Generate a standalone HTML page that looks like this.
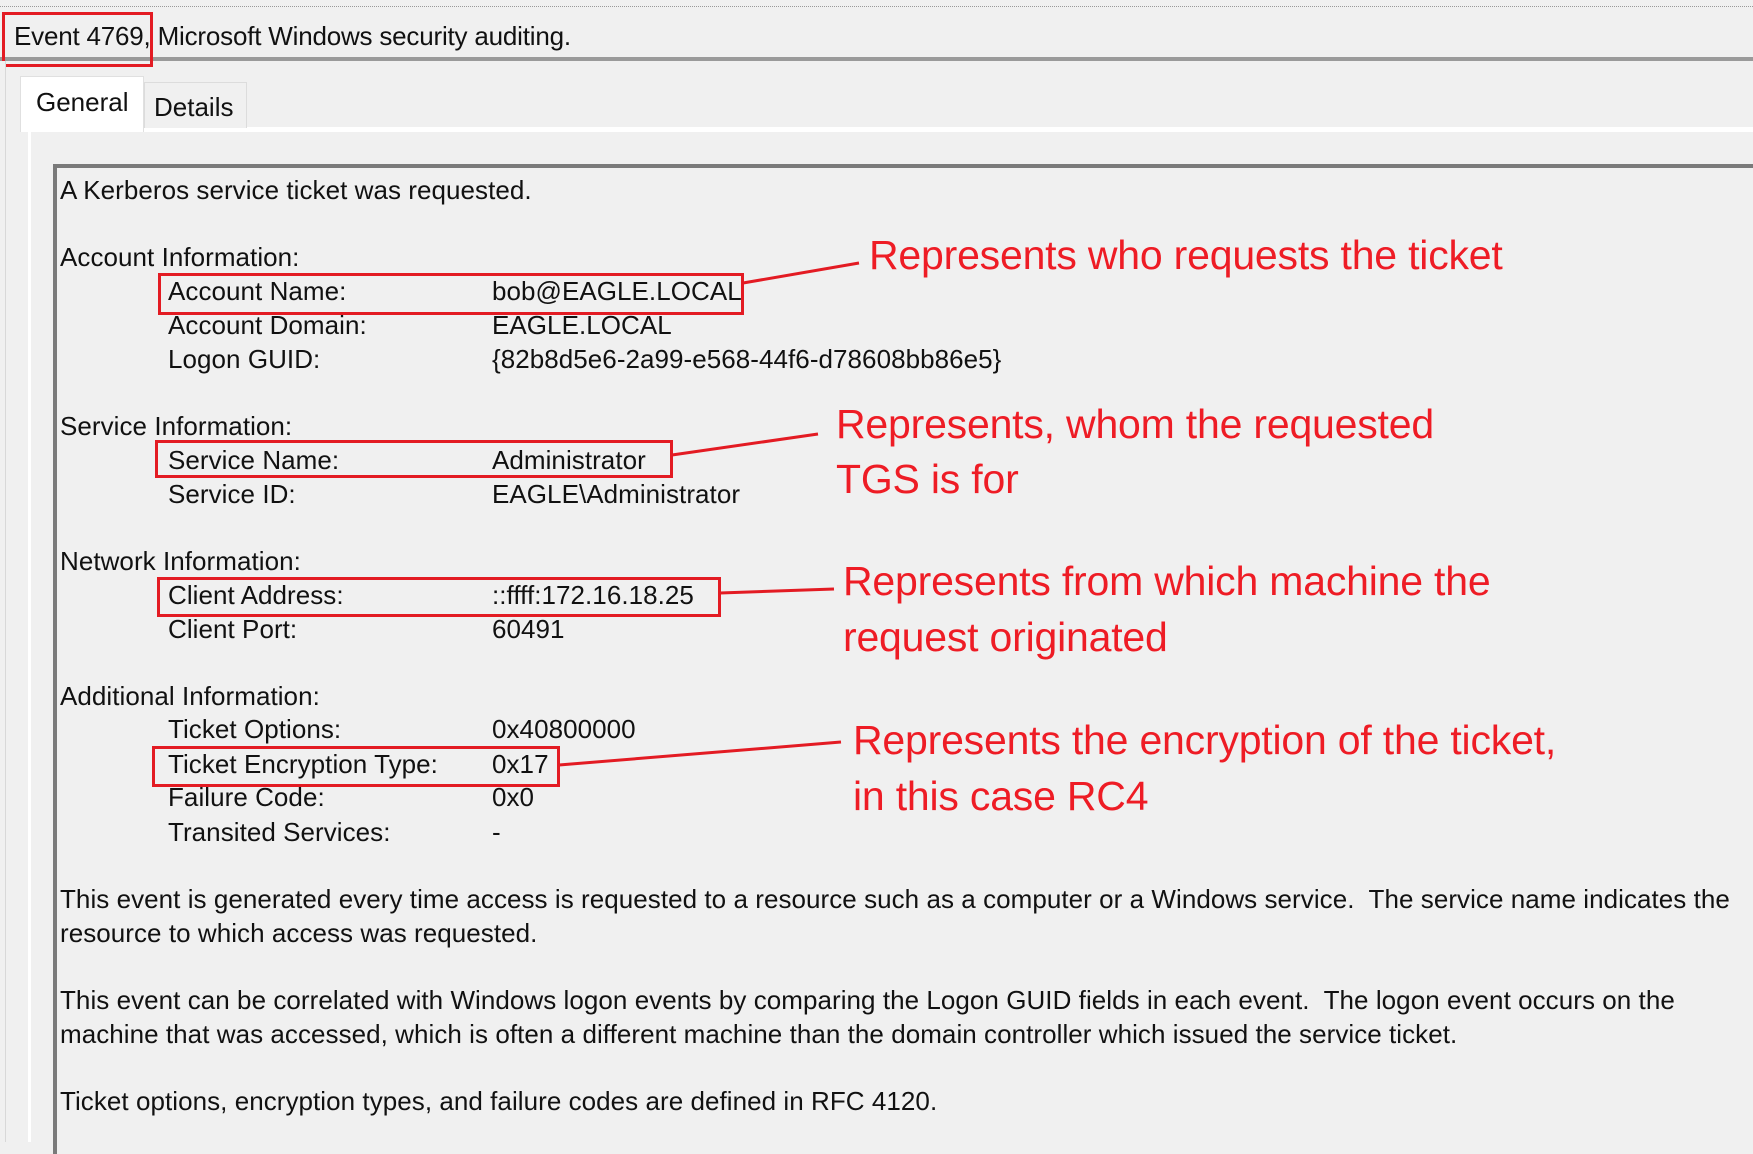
<!DOCTYPE html>
<html><head><meta charset="utf-8"><style>
*{margin:0;padding:0;box-sizing:border-box}
body{width:1753px;height:1142px;background:#f0f0f0;position:relative;overflow:hidden;font-family:"Liberation Sans",sans-serif;color:#111}
.a{position:absolute;white-space:nowrap}
.t{font-size:26px;line-height:34px;letter-spacing:0.05px;margin-top:-2px}
.r{position:absolute;border:3px solid #e31b23}
.red{color:#ee1c25;font-size:41px;line-height:46px;letter-spacing:-0.2px}
</style></head><body>
<div class="a" style="left:0;top:6px;width:1753px;border-top:1px dotted #999"></div>
<div class="a" style="left:0;top:57px;width:1753px;height:4px;background:#9a9a9a"></div>
<div class="a" style="left:14px;top:19px;font-size:26px;line-height:34px;letter-spacing:-0.2px">Event 4769, Microsoft Windows security auditing.</div>
<div class="r" style="left:2px;top:12px;width:151px;height:55px"></div>
<div class="a" style="left:0;top:61px;width:6px;height:1081px;background:#f0f0f0;border-right:1px solid #d8d8d8"></div>
<div class="a" style="left:28px;top:127px;width:1725px;height:1015px;background:#f0f0f0;border-top:5px solid #fff;border-left:3px solid #fff"></div>
<div class="a" style="left:20px;top:76px;width:124px;height:56px;background:#fff;border:1px solid #e0e0e0;border-bottom:none"></div>
<div class="a" style="left:144px;top:82px;width:103px;height:46px;background:#f0f0f0;border:1px solid #dcdcdc;border-bottom:none"></div>
<div class="a" style="left:36px;top:85px;font-size:26px;line-height:34px">General</div>
<div class="a" style="left:154px;top:90px;font-size:26px;line-height:34px">Details</div>
<div class="a" style="left:53px;top:164px;width:1710px;height:990px;border-top:4px solid #7a7a7a;border-left:4px solid #7a7a7a;background:#f0f0f0"></div>

<div class="a t" style="left:60px;top:175px">A Kerberos service ticket was requested.</div>
<div class="a t" style="left:60px;top:242px">Account Information:</div>
<div class="a t" style="left:168px;top:276px">Account Name:</div><div class="a t" style="left:492px;top:276px">bob@EAGLE.LOCAL</div>
<div class="a t" style="left:168px;top:310px">Account Domain:</div><div class="a t" style="left:492px;top:310px">EAGLE.LOCAL</div>
<div class="a t" style="left:168px;top:344px">Logon GUID:</div><div class="a t" style="left:492px;top:344px">{82b8d5e6-2a99-e568-44f6-d78608bb86e5}</div>
<div class="a t" style="left:60px;top:411px">Service Information:</div>
<div class="a t" style="left:168px;top:445px">Service Name:</div><div class="a t" style="left:492px;top:445px">Administrator</div>
<div class="a t" style="left:168px;top:479px">Service ID:</div><div class="a t" style="left:492px;top:479px">EAGLE\Administrator</div>
<div class="a t" style="left:60px;top:546px">Network Information:</div>
<div class="a t" style="left:168px;top:580px">Client Address:</div><div class="a t" style="left:492px;top:580px">::ffff:172.16.18.25</div>
<div class="a t" style="left:168px;top:614px">Client Port:</div><div class="a t" style="left:492px;top:614px">60491</div>
<div class="a t" style="left:60px;top:681px">Additional Information:</div>
<div class="a t" style="left:168px;top:714px">Ticket Options:</div><div class="a t" style="left:492px;top:714px">0x40800000</div>
<div class="a t" style="left:168px;top:749px">Ticket Encryption Type:</div><div class="a t" style="left:492px;top:749px">0x17</div>
<div class="a t" style="left:168px;top:782px">Failure Code:</div><div class="a t" style="left:492px;top:782px">0x0</div>
<div class="a t" style="left:168px;top:817px">Transited Services:</div><div class="a t" style="left:492px;top:817px">-</div>
<div class="a t" style="left:60px;top:884px">This event is generated every time access is requested to a resource such as a computer or a Windows service.&nbsp; The service name indicates the</div>
<div class="a t" style="left:60px;top:918px">resource to which access was requested.</div>
<div class="a t" style="left:60px;top:985px">This event can be correlated with Windows logon events by comparing the Logon GUID fields in each event.&nbsp; The logon event occurs on the</div>
<div class="a t" style="left:60px;top:1019px">machine that was accessed, which is often a different machine than the domain controller which issued the service ticket.</div>
<div class="a t" style="left:60px;top:1086px">Ticket options, encryption types, and failure codes are defined in RFC 4120.</div>

<div class="r" style="left:158px;top:273px;width:586px;height:42px"></div>
<div class="r" style="left:155px;top:440px;width:518px;height:38px"></div>
<div class="r" style="left:157px;top:577px;width:564px;height:40px"></div>
<div class="r" style="left:152px;top:746px;width:408px;height:41px"></div>
<svg class="a" style="left:0;top:0" width="1753" height="1142"><g stroke="#e31b23" stroke-width="3" fill="none">
<line x1="743" y1="283" x2="859" y2="263"/><line x1="672" y1="455" x2="818" y2="434"/>
<line x1="720" y1="593" x2="834" y2="589"/><line x1="559" y1="765" x2="841" y2="742"/></g></svg>
<div class="a red" style="left:869px;top:232px">Represents who requests the ticket</div>
<div class="a red" style="left:836px;top:401px">Represents, whom the requested</div>
<div class="a red" style="left:836px;top:456px">TGS is for</div>
<div class="a red" style="left:843px;top:558px">Represents from which machine the</div>
<div class="a red" style="left:843px;top:614px">request originated</div>
<div class="a red" style="left:853px;top:717px">Represents the encryption of the ticket,</div>
<div class="a red" style="left:853px;top:773px">in this case RC4</div>
</body></html>
